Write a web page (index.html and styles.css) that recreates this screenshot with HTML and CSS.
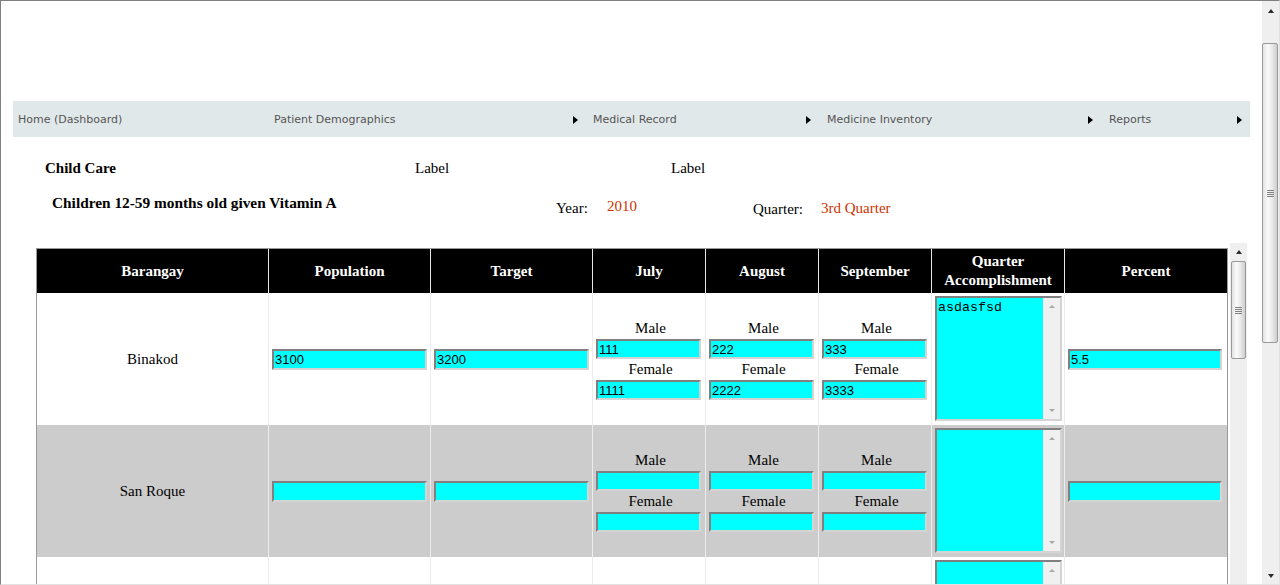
FILE: index.html
```html
<!DOCTYPE html>
<html>
<head>
<meta charset="utf-8">
<title>Child Care</title>
<link rel="stylesheet" href="styles.css">
</head>
<body>
<div class="frame">
  <div class="page">
    <nav class="menu">
      <div class="mi mi-home">Home (Dashboard)</div>
      <div class="mi has-sub w-patient">Patient Demographics</div>
      <div class="mi has-sub w-medical">Medical Record</div>
      <div class="mi has-sub w-medicine">Medicine Inventory</div>
      <div class="mi has-sub w-reports">Reports</div>
    </nav>

    <div class="info">
      <div class="info-row1">
        <span class="title c-title">Child Care</span>
        <span class="c-label1">Label</span>
        <span class="c-label2">Label</span>
      </div>
      <div class="info-row2">
        <span class="title c-sub">Children 12-59 months old given Vitamin A</span>
        <span class="c-yk">Year:</span>
        <span class="val c-yv">2010</span>
        <span class="c-qk">Quarter:</span>
        <span class="val c-qv">3rd Quarter</span>
      </div>
    </div>

    <div class="grid-area">
      <div class="grid-body">
        <table class="grid">
          <colgroup>
            <col class="col-b"><col class="col-p"><col class="col-t">
            <col class="col-m"><col class="col-m"><col class="col-m">
            <col class="col-q"><col class="col-pc">
          </colgroup>
          <thead>
            <tr>
              <th>Barangay</th><th>Population</th><th>Target</th>
              <th>July</th><th>August</th><th>September</th>
              <th>Quarter<br>Accomplishment</th><th class="last">Percent</th>
            </tr>
          </thead>
          <tbody>
            <tr>
              <td class="name">Binakod</td>
              <td><input class="num" type="text" value="3100"></td>
              <td><input class="num" type="text" value="3200"></td>
              <td class="mf"><div class="lbl">Male</div><input class="sm" type="text" value="111"><div class="lbl">Female</div><input class="sm" type="text" value="1111"></td>
              <td class="mf"><div class="lbl">Male</div><input class="sm" type="text" value="222"><div class="lbl">Female</div><input class="sm" type="text" value="2222"></td>
              <td class="mf"><div class="lbl">Male</div><input class="sm" type="text" value="333"><div class="lbl">Female</div><input class="sm" type="text" value="3333"></td>
              <td>
                <div class="acc">
                  <textarea class="acc-text">asdasfsd</textarea>
                  <div class="tsb"><div class="tsb-up"></div><div class="tsb-down"></div></div>
                </div>
              </td>
              <td class="last"><input class="num pc" type="text" value="5.5"></td>
            </tr>
            <tr class="alt">
              <td class="name">San Roque</td>
              <td><input class="num" type="text"></td>
              <td><input class="num" type="text"></td>
              <td class="mf"><div class="lbl">Male</div><input class="sm" type="text"><div class="lbl">Female</div><input class="sm" type="text"></td>
              <td class="mf"><div class="lbl">Male</div><input class="sm" type="text"><div class="lbl">Female</div><input class="sm" type="text"></td>
              <td class="mf"><div class="lbl">Male</div><input class="sm" type="text"><div class="lbl">Female</div><input class="sm" type="text"></td>
              <td>
                <div class="acc">
                  <textarea class="acc-text"></textarea>
                  <div class="tsb"><div class="tsb-up"></div><div class="tsb-down"></div></div>
                </div>
              </td>
              <td class="last"><input class="num pc" type="text"></td>
            </tr>
            <tr class="top-only">
              <td class="name"></td>
              <td></td>
              <td></td>
              <td></td>
              <td></td>
              <td></td>
              <td>
                <div class="acc">
                  <textarea class="acc-text"></textarea>
                  <div class="tsb"><div class="tsb-up"></div><div class="tsb-down"></div></div>
                </div>
              </td>
              <td class="last"></td>
            </tr>
          </tbody>
        </table>
      </div>
      <div class="sb sb-grid">
        <div class="sb-btn sb-up"></div>
        <div class="sb-thumb sb-thumb-grid"></div>
        <div class="sb-track"></div>
      </div>
    </div>
  </div>

  <div class="sb sb-page">
    <div class="sb-btn sb-up sb-up-page"></div>
    <div class="sb-gap"></div>
    <div class="sb-thumb sb-thumb-page"></div>
    <div class="sb-track"></div>
    <div class="sb-btn sb-down"></div>
  </div>
</div>
</body>
</html>
```

FILE: styles.css
```css
html, body {
  margin: 0;
  padding: 0;
  background: #fff;
}

.frame {
  display: flex;
  width: 1280px;
  height: 585px;
  box-sizing: border-box;
  border: 1px solid;
  border-color: #808080 #e2e2e2 #e2e2e2 #808080;
  overflow: hidden;
  background: #fff;
  font-family: "Liberation Serif", "Times New Roman", serif;
  font-size: 15px;
  color: #000;
}

.page {
  flex: 1;
  min-width: 0;
  display: flex;
  flex-direction: column;
  padding-top: 100px;
  overflow: hidden;
}

/* ---------- fake scrollbars ---------- */
.sb {
  width: 17px;
  flex: none;
  display: flex;
  flex-direction: column;
  background: #efefef;
}
.sb-btn {
  height: 17px;
  flex: none;
  display: flex;
  align-items: center;
  justify-content: center;
}
.sb-up::before {
  content: "";
  border-left: 3.5px solid transparent;
  border-right: 3.5px solid transparent;
  border-bottom: 4px solid #2a2a2a;
}
.sb-down::before {
  content: "";
  border-left: 3.5px solid transparent;
  border-right: 3.5px solid transparent;
  border-top: 4px solid #2a2a2a;
}
.sb-up-page { height: 20px; }
.sb-gap { height: 22px; flex: none; }
.sb-track { flex: 1; }
.sb-thumb {
  flex: none;
  box-sizing: border-box;
  margin: 0 1px;
  border: 1px solid #9a9a9a;
  border-radius: 2px;
  background:
    repeating-linear-gradient(#808080 0 1px, transparent 1px 2px) center / 7px 7px no-repeat,
    linear-gradient(to right, #e2e2e2, #fbfbfb 35%, #e6e6e6 70%, #cdcdcd);
}
.sb-thumb-page { height: 300px; margin: 0 1px 0 0; }
.sb-thumb-grid { height: 98px; margin-top: 1px; }

/* ---------- menu ---------- */
.menu {
  display: flex;
  flex: none;
  width: 1237px;
  height: 36px;
  margin-left: 12px;
  background: #e1e8ea;
  font-family: "DejaVu Sans", Verdana, sans-serif;
  font-size: 11px;
  color: #555;
}
.mi {
  display: flex;
  align-items: center;
  justify-content: space-between;
  box-sizing: border-box;
  padding-left: 5px;
  padding-top: 1px;
  white-space: nowrap;
}
.has-sub::after {
  content: "";
  width: 0;
  height: 0;
  border-left: 5px solid #000;
  border-top: 4.5px solid transparent;
  border-bottom: 4.5px solid transparent;
}
.mi-home { width: 256px; }
.w-patient { width: 319px; padding-right: 10px; }
.w-medical { width: 234px; padding-right: 11px; }
.w-medicine { width: 282px; padding-right: 11px; }
.w-reports { flex: 1; padding-right: 8px; }

/* ---------- info header ---------- */
.info { flex: none; }
.info-row1 {
  display: flex;
  height: 18px;
  line-height: 18px;
  margin-top: 22px;
  padding-left: 44px;
}
.info-row2 {
  display: flex;
  align-items: flex-start;
  height: 18px;
  line-height: 18px;
  margin-top: 17px;
  padding-left: 51px;
}
.title { font-weight: bold; }
.val { color: #cc3300; }
.c-title { width: 370px; }
.c-label1 { width: 256px; }
.c-sub { width: 504px; font-size: 15.35px; }
.c-yk { width: 51px; padding-top: 5px; }
.c-yv { width: 146px; padding-top: 3px; }
.c-qk { width: 68px; padding-top: 6px; }
.c-qv { padding-top: 5px; }

/* ---------- grid ---------- */
.grid-area {
  flex: 1;
  min-height: 0;
  display: flex;
  width: 1211px;
  margin: 31px 0 0 35px;
}
.grid-body {
  width: 1194px;
  flex: none;
  overflow: hidden;
}

.grid {
  width: 1192px;
  margin-top: 5px;
  border: 1px solid #999;
  border-collapse: separate;
  border-spacing: 0;
  table-layout: fixed;
}
.col-b { width: 232px; }
.col-p, .col-t { width: 162px; }
.col-m { width: 113px; }
.col-q { width: 133px; }
.col-pc { width: 162px; }

.grid th {
  background: #000;
  color: #fff;
  font-weight: bold;
  font-size: 15px;
  line-height: 19px;
  padding: 3px 0;
  border-right: 1px solid #e8e8e8;
  text-align: center;
  vertical-align: middle;
}
.grid td {
  height: 132px;
  padding: 0 0 0 3px;
  border-right: 1px solid #ececec;
  text-align: center;
  vertical-align: middle;
}
.grid td.name { padding: 0; }
.grid tr.top-only td { vertical-align: top; }
.grid th.last, .grid td.last { border-right: none; }
.grid tr.alt td { background: #cccccc; }

.lbl {
  height: 21px;
  line-height: 21px;
}

.num, .sm {
  display: block;
  box-sizing: border-box;
  margin: 0;
  padding: 0 1px;
  border: 2px solid;
  border-color: #808080 #d4d4d4 #d4d4d4 #808080;
  background: #00ffff;
  color: #000;
  font-family: "Liberation Sans", Arial, sans-serif;
  font-size: 13px;
  text-align: left;
  outline: none;
}
.num { width: 155px; height: 21px; }
.pc { width: 154px; }
.sm { width: 105px; height: 20px; }

.acc {
  display: flex;
  box-sizing: border-box;
  width: 127px;
  height: 125px;
  margin: 3px 0 4px;
  border: 2px solid;
  border-color: #808080 #d4d4d4 #d4d4d4 #808080;
  background: #00ffff;
}
.acc-text {
  flex: 1;
  min-width: 0;
  box-sizing: border-box;
  margin: 0;
  padding: 2px 1px;
  border: none;
  background: #00ffff;
  color: #000;
  font-family: "Liberation Mono", "Courier New", monospace;
  font-size: 13.33px;
  line-height: 15px;
  resize: none;
  overflow: hidden;
  outline: none;
}
.tsb {
  width: 17px;
  flex: none;
  display: flex;
  flex-direction: column;
  justify-content: space-between;
  background: #f0f0f0;
  border-left: 1px solid #f7f7f7;
  box-sizing: border-box;
}
.tsb-up, .tsb-down {
  height: 17px;
  display: flex;
  align-items: center;
  justify-content: center;
}
.tsb-up::before {
  content: "";
  border-left: 3.5px solid transparent;
  border-right: 3.5px solid transparent;
  border-bottom: 3px solid #a8a8a8;
}
.tsb-down::before {
  content: "";
  border-left: 3.5px solid transparent;
  border-right: 3.5px solid transparent;
  border-top: 3px solid #a8a8a8;
}
```
